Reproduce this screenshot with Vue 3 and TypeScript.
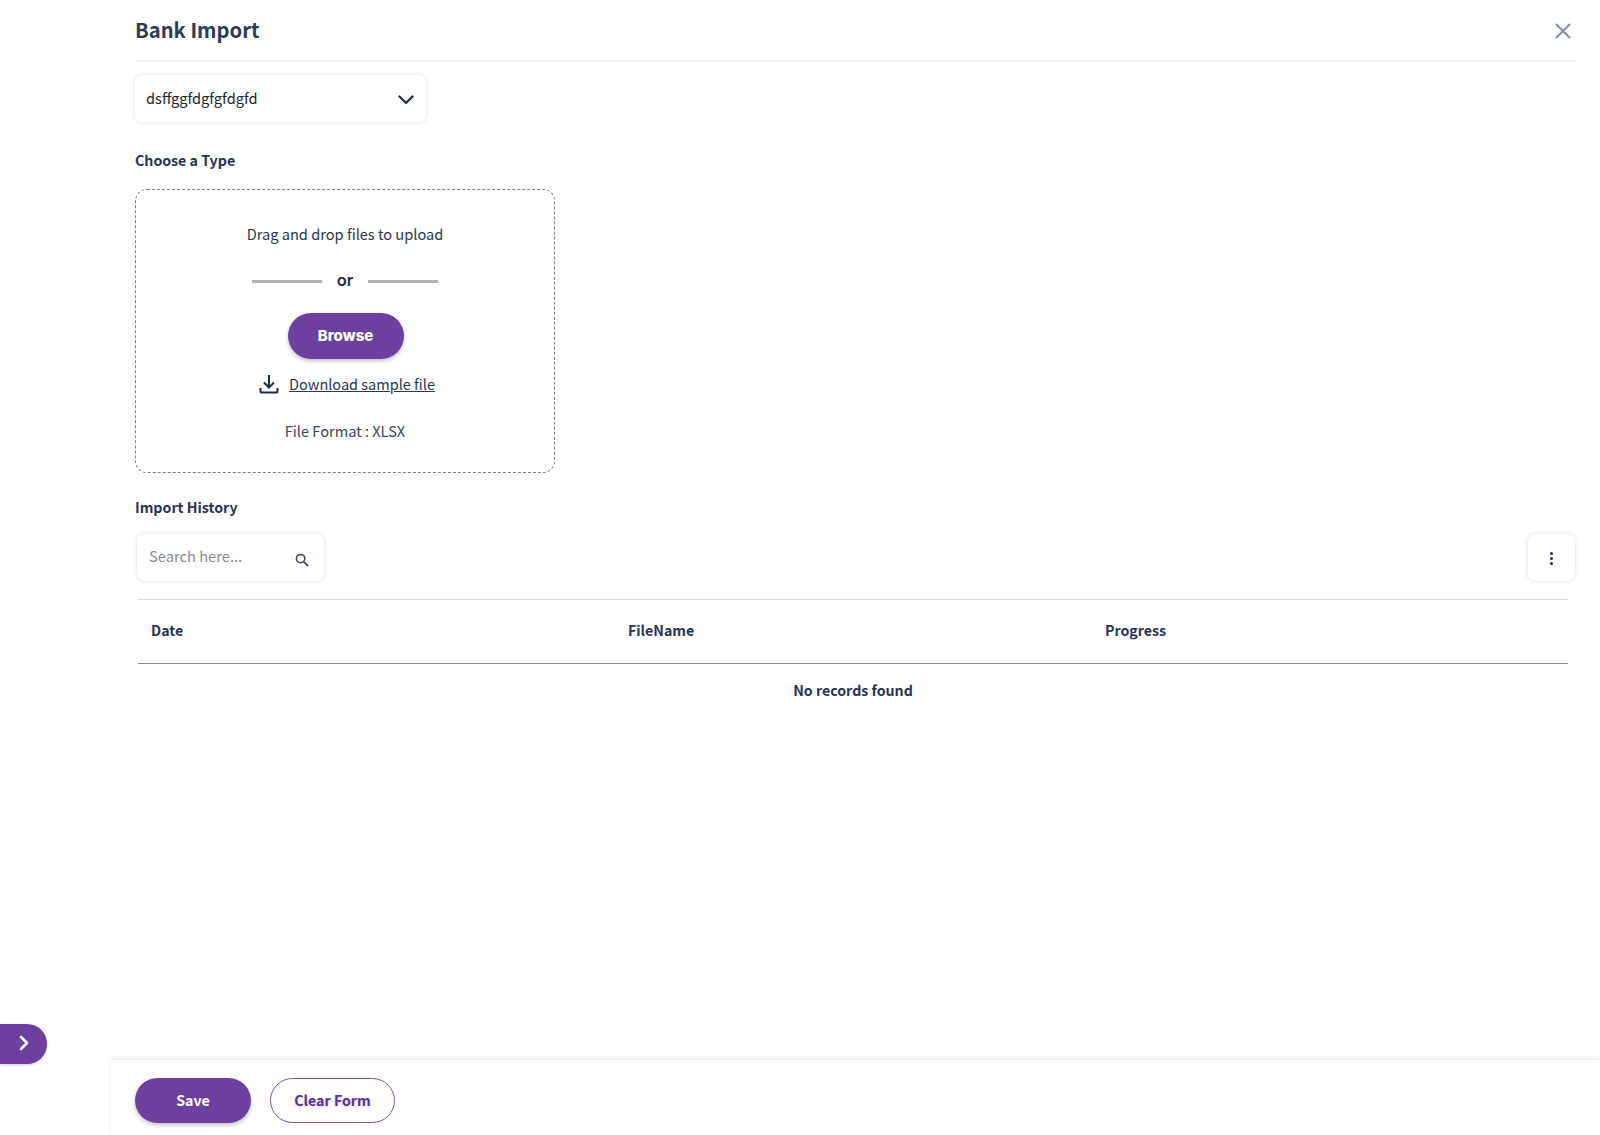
<script setup lang="ts">
const columns: string[] = ['Date', 'FileName', 'Progress']
</script>

<template>
  <div class="page">
    <button class="side-toggle" aria-label="Expand">
      <svg width="12" height="16" viewBox="0 0 12 16" fill="none"><path d="M3 2l6 6-6 6" stroke="#fff" stroke-width="2.6" stroke-linecap="round" stroke-linejoin="round"/></svg>
    </button>

    <main class="content">
      <header class="head">
        <h1>Bank Import</h1>
        <svg class="close" width="18" height="18" viewBox="0 0 18 18" fill="none"><path d="M2 2l14 14M16 2L2 16" stroke="#8490a8" stroke-width="2"/></svg>
      </header>

      <div class="select">
        <span>dsffggfdgfgfdgfd</span>
        <svg width="16" height="10" viewBox="0 0 16 10" fill="none"><path d="M1.5 1.5L8 8l6.5-6.5" stroke="#1f2d4d" stroke-width="2.3" stroke-linecap="round" stroke-linejoin="round"/></svg>
      </div>

      <h2 class="label type-label">Choose a Type</h2>

      <section class="drop">
        <p class="drag">Drag and drop files to upload</p>
        <div class="or"><i></i><span>or</span><i></i></div>
        <button class="btn browse">Browse</button>
        <div class="sample">
          <svg width="20" height="20" viewBox="0 0 20 20" fill="none"><path d="M10 1v12M5 8.5l5 5 5-5M1.5 14v3.5a1 1 0 0 0 1 1h15a1 1 0 0 0 1-1V14" stroke="#1f2d4d" stroke-width="2"/></svg>
          <a>Download sample file</a>
        </div>
        <p class="format">File Format : XLSX</p>
      </section>

      <h2 class="label history-label">Import History</h2>

      <div class="tools">
        <div class="search">
          <span>Search here...</span>
          <svg width="14" height="14" viewBox="0 0 14 14" fill="none"><circle cx="5.6" cy="5.6" r="4.2" stroke="#3a4560" stroke-width="1.5"/><path d="M8.8 8.8l4.4 4.4" stroke="#3a4560" stroke-width="1.7"/></svg>
        </div>
        <div class="kebab"><i></i><i></i><i></i></div>
      </div>

      <div class="table">
        <div class="thead"><div v-for="c in columns" :key="c" class="th">{{ c }}</div></div>
        <div class="empty">No records found</div>
      </div>
    </main>

    <footer class="foot">
      <button class="btn save">Save</button>
      <button class="btn clear">Clear Form</button>
    </footer>
  </div>
</template>

<style>
html, body { margin: 0; background: #fff; }
</style>

<style scoped>
.page {
  position: relative;
  height: 1135px;
  overflow: hidden;
  display: flex;
  flex-direction: column;
  font-family: "Noto Sans CJK SC", "Noto Sans", sans-serif;
  color: #1f2d4d;
  background: #fff;
}
.side-toggle {
  position: absolute;
  left: 0;
  top: 1024px;
  width: 47px;
  height: 40px;
  border: 0;
  padding: 0 0 2px 0;
  border-radius: 0 20px 20px 0;
  background: #6d3f9f;
  box-shadow: 0 1px 3px rgba(0,0,0,.2);
  display: flex;
  align-items: center;
  justify-content: center;
}
.content {
  flex: 1;
  padding: 0 23px 0 135px;
  display: flex;
  flex-direction: column;
  align-items: flex-start;
}
.head {
  align-self: stretch;
  height: 62px;
  box-sizing: border-box;
  border-bottom: 2px solid #eeeef5;
  display: flex;
  align-items: center;
  justify-content: space-between;
  padding: 0 5px 0 0;
}
h1 { margin: 0; font-size: 20.2px; line-height: 30px; font-weight: 600; color: #2d3a58; }
.close { margin-top: 1px; }
.select {
  margin-top: 13px;
  width: 291px;
  height: 47px;
  box-sizing: border-box;
  padding: 0 12px 0 11px;
  border-radius: 7px;
  background: #fff;
  box-shadow: 0 0 5px rgba(30,40,80,.14);
  display: flex;
  align-items: center;
  justify-content: space-between;
  font-size: 14.6px;
  line-height: 20px;
  color: #1d2535;
}
.select span { margin-top: -2px; }
.select svg { margin-top: 3px; }
.label { margin: 0; font-size: 14.2px; line-height: 20px; font-weight: 600; color: #28355a; }
.type-label { margin-top: 28px; }
.drop {
  margin-top: 19px;
  width: 420px;
  height: 284px;
  box-sizing: border-box;
  border: 1px dashed #7d8088;
  border-radius: 12px;
  display: flex;
  flex-direction: column;
  align-items: center;
}
.drop p { margin: 0; font-size: 14.6px; line-height: 20px; }
.drag { margin-top: 34px !important; color: #2a3756; }
.or { margin-top: 24px; display: flex; align-items: center; height: 24px; }
.or i { width: 70px; height: 3px; margin-top: 2px; background: #b3b3b3; }
.or span { width: 46px; text-align: center; font-family: "Inter", sans-serif; font-size: 16.5px; font-weight: 600; color: #1f2d4d; }
.btn {
  border: 0;
  border-radius: 24px;
  cursor: pointer;
  font-family: inherit;
}
.browse {
  margin: 21px 0 0 1px;
  width: 116px;
  height: 46px;
  padding: 0 0 2px;
  background: #6d3f9f;
  color: #fff;
  font-family: "Inter", sans-serif;
  font-size: 15px;
  font-weight: 800;
  box-shadow: 0 2px 4px rgba(0,0,0,.25);
}
.sample { margin: 14px 0 0 4px; display: flex; align-items: center; gap: 10px; height: 22px; }
.sample a { font-size: 14.5px; line-height: 20px; text-decoration: underline; color: #2a3756; }
.format { margin-top: 26px !important; color: #3b4660; }
.history-label { margin-top: 23.5px; }
.tools {
  margin-top: 17.5px;
  align-self: stretch;
  padding: 0 2px;
  display: flex;
  justify-content: space-between;
}
.search, .kebab {
  height: 47px;
  box-sizing: border-box;
  border-radius: 8px;
  background: #fff;
  box-shadow: 0 0 5px rgba(30,40,80,.16);
}
.search {
  width: 187px;
  padding: 0 15px 0 12px;
  display: flex;
  align-items: center;
  justify-content: space-between;
  font-size: 14.7px;
  color: #8a8d94;
}
.search span { margin-top: -4px; }
.search svg { margin-top: 4px; }
.kebab {
  width: 47px;
  padding-top: 1px;
  display: flex;
  flex-direction: column;
  align-items: center;
  justify-content: center;
  gap: 2px;
}
.kebab i { width: 3px; height: 3px; border-radius: 50%; background: #1f2d4d; }
.table { margin: 18px 9px 0 3px; align-self: stretch; }
.thead {
  height: 65px;
  box-sizing: border-box;
  border-top: 1px solid #dedede;
  border-bottom: 1px solid #8a8c92;
  display: grid;
  grid-template-columns: repeat(3, 477px);
  padding-left: 13px;
  align-items: center;
  font-size: 14.2px;
  font-weight: 600;
  color: #28355a;
}
.th { margin-top: -3px; }
.empty { margin-top: 15px; text-align: center; font-size: 14.2px; line-height: 22px; font-weight: 600; color: #28355a; }
.foot {
  margin-left: 111px;
  height: 75px;
  box-sizing: border-box;
  padding: 18px 0 0 24px;
  box-shadow: 0 -1px 4px rgba(0,0,0,.1);
  display: flex;
  gap: 19px;
}
.foot .btn { height: 45px; padding: 0 0 2px; font-size: 14.2px; font-weight: 600; }
.save { width: 116px; background: #6d3f9f; color: #fff; box-shadow: 0 2px 4px rgba(0,0,0,.25); }
.foot .clear { width: 125px; background: #fff; border: 1px solid #7d55a8; color: #5f2f98; text-shadow: 0 1px 3px rgba(0,0,0,.2); }
</style>
